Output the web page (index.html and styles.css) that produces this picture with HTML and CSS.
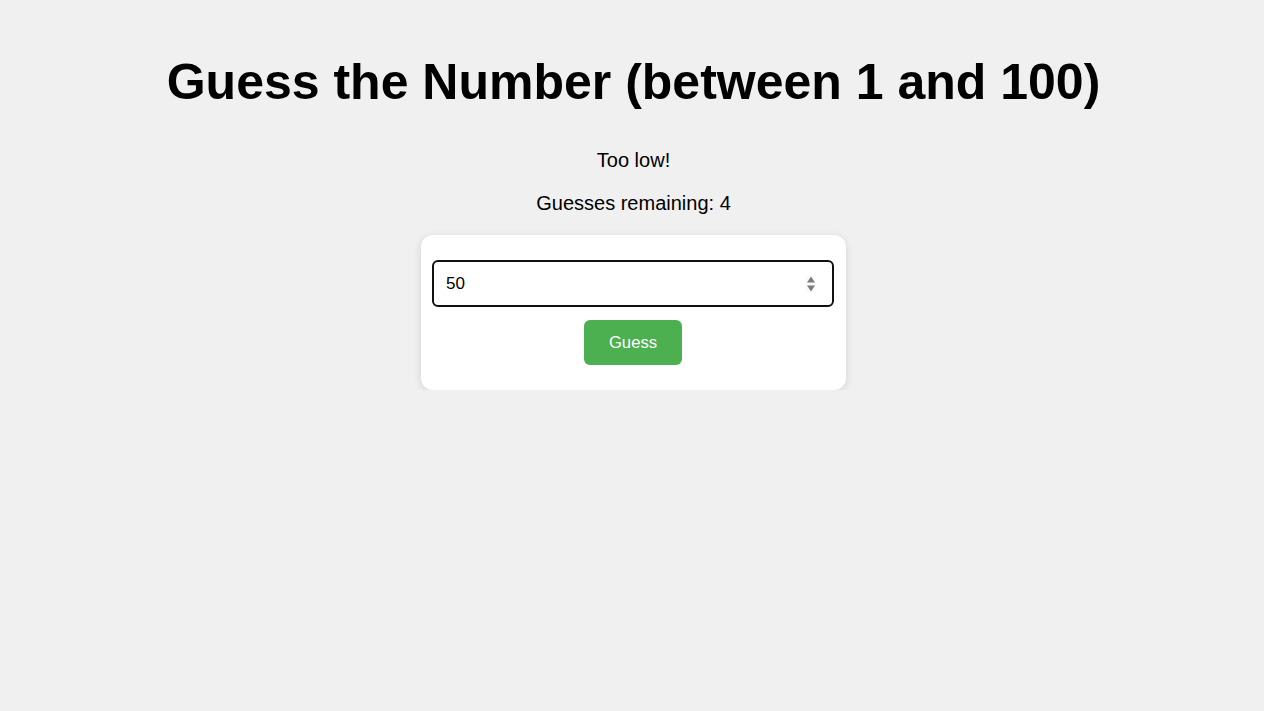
FILE: index.html
```html
<!DOCTYPE html>
<html lang="en">
<head>
<meta charset="utf-8">
<title>Guess the Number</title>
<link rel="stylesheet" href="styles.css">
</head>
<body>
  <main class="game">
    <h1 class="title">Guess the Number (between 1 and 100)</h1>
    <p class="message">Too low!</p>
    <p class="message">Guesses remaining: 4</p>
    <div class="card">
      <div class="field">
        <span class="field-value">50</span>
        <span class="spinner">
          <svg width="10" height="18" viewBox="0 0 10 18" aria-hidden="true">
            <path d="M5 1.5 L9 7.5 L1 7.5 Z" fill="#7d7d7d"/>
            <path d="M5 16.5 L9 10.5 L1 10.5 Z" fill="#7d7d7d"/>
          </svg>
        </span>
      </div>
      <button class="guess-btn" type="button">Guess</button>
    </div>
  </main>
</body>
</html>
```

FILE: styles.css
```css
html, body {
  margin: 0;
  padding: 0;
}

body {
  background: #f0f0f0;
  font-family: "Liberation Sans", Arial, sans-serif;
  color: #000;
  padding: 54px 0 0 3px;
}

.game {
  display: flex;
  flex-direction: column;
  align-items: center;
  text-align: center;
}

.title {
  font-size: 50px;
  font-weight: bold;
  line-height: 57px;
  margin: 0 0 38px;
}

.message {
  font-size: 20px;
  line-height: 23px;
  margin: 0 0 20px;
}

.card {
  width: 425px;
  box-sizing: border-box;
  background: #fff;
  border-radius: 12px;
  box-shadow: 0 2px 8px rgba(0, 0, 0, 0.12);
  padding: 25px 12px 25px 11px;
  display: flex;
  flex-direction: column;
  align-items: stretch;
  gap: 13px;
}

.field {
  height: 47px;
  box-sizing: border-box;
  border: 2px solid #111;
  border-radius: 6px;
  background: #fff;
  display: flex;
  align-items: center;
  justify-content: space-between;
  padding: 0 16px 0 12px;
  font-size: 17px;
}

.field-value {
  line-height: 19px;
}

.spinner {
  display: flex;
  align-items: center;
  justify-content: center;
  width: 10px;
  height: 18px;
  background: #fafafa;
}

.spinner svg {
  display: block;
}

.guess-btn {
  align-self: center;
  width: 98px;
  height: 45px;
  background: #4caf50;
  color: #fff;
  border: none;
  border-radius: 6px;
  font-family: "Liberation Sans", Arial, sans-serif;
  font-size: 16.7px;
  padding: 0;
  cursor: pointer;
}
```
